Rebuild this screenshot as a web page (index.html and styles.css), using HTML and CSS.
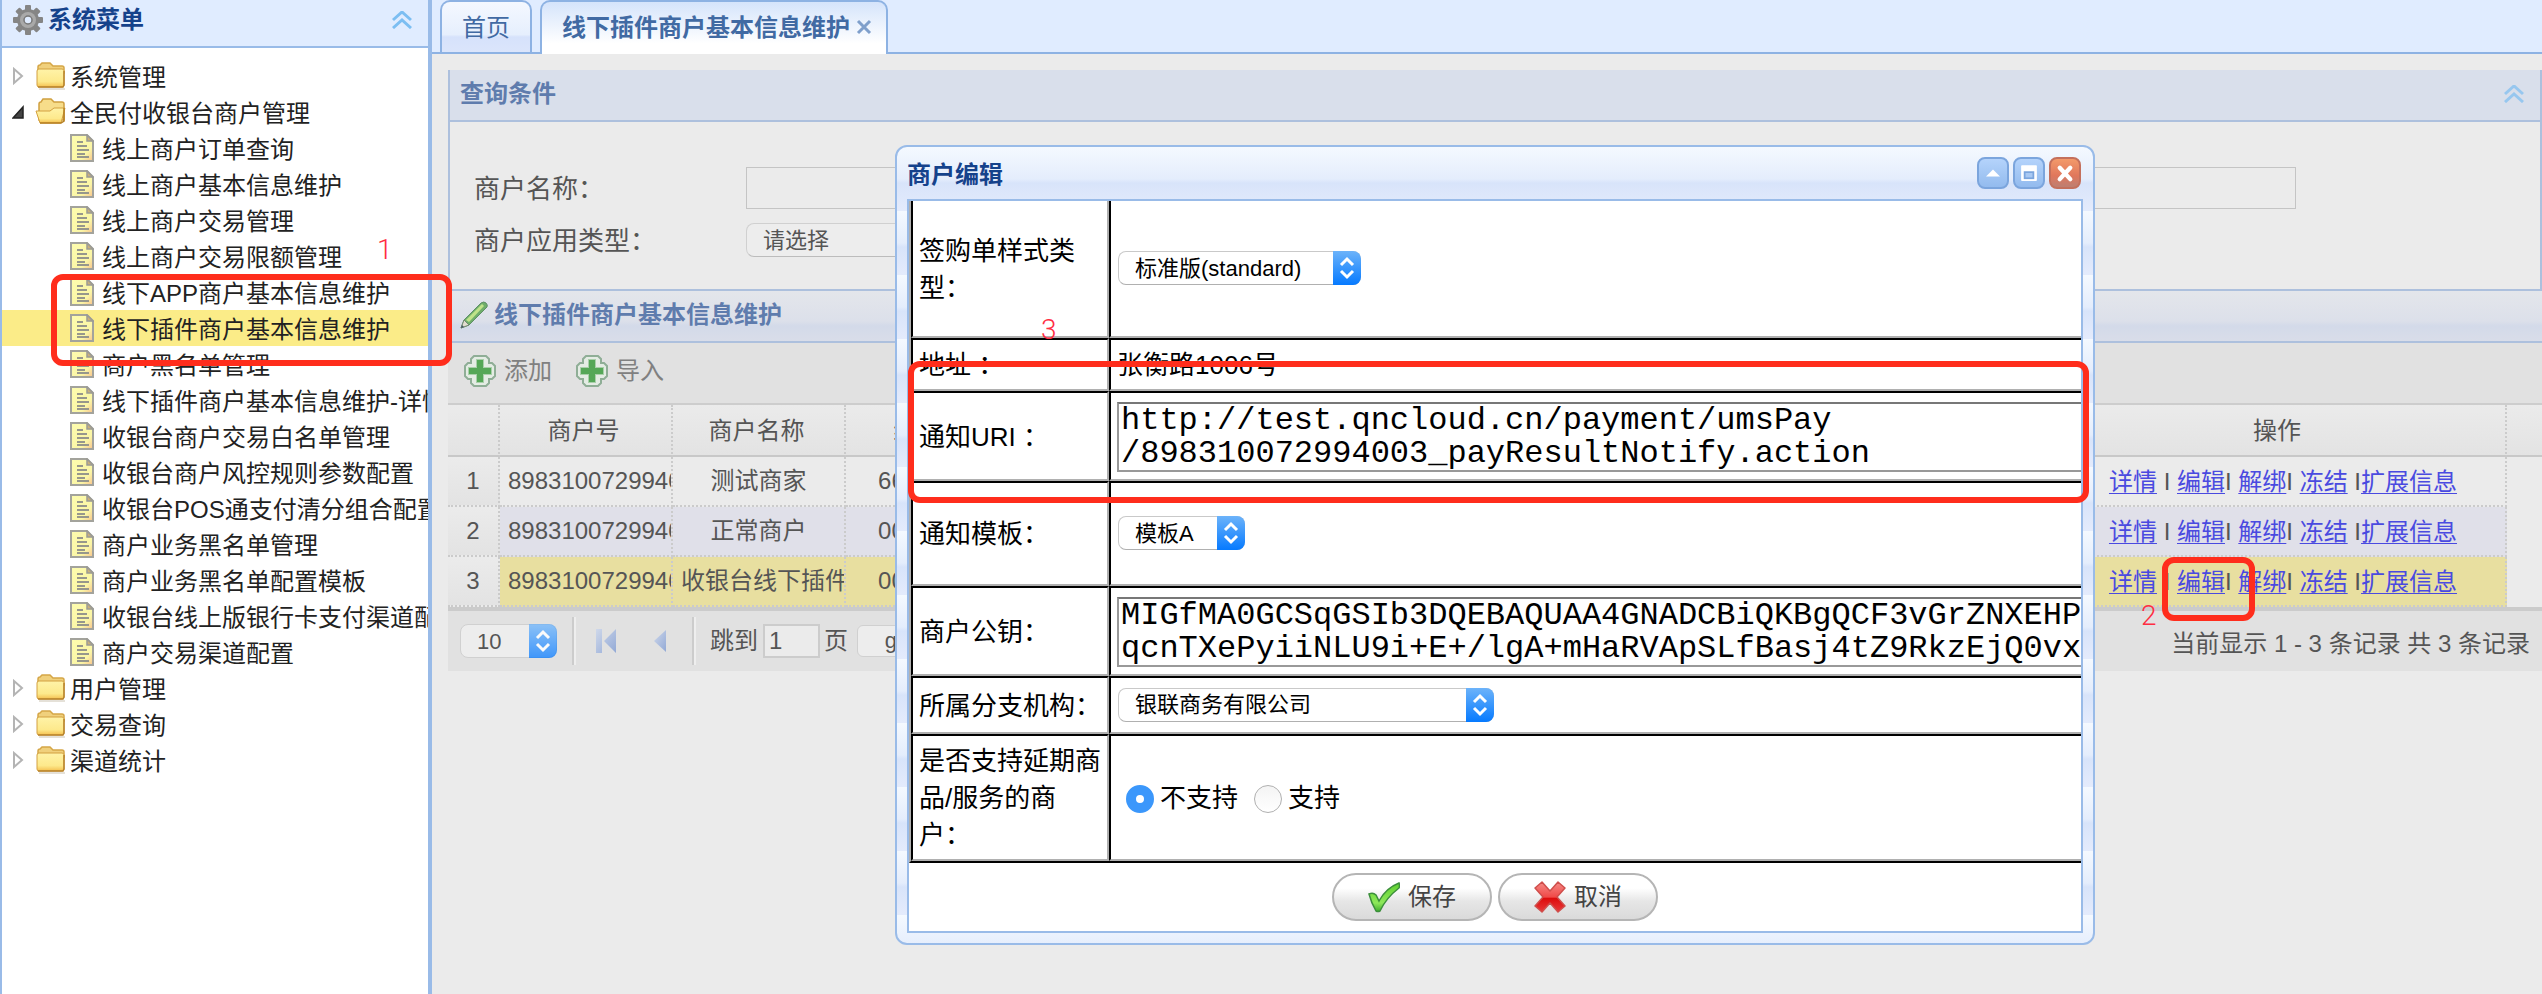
FILE: index.html
```html
<!DOCTYPE html>
<html lang="zh-CN">
<head>
<meta charset="utf-8">
<title>线下插件商户基本信息维护</title>
<link rel="stylesheet" href="styles.css">
</head>
<body>
<svg class="defs" aria-hidden="true">
  <defs>
    <linearGradient id="gFolder" x1="0" y1="0" x2="0" y2="1"><stop offset="0" stop-color="#fff3a8"/><stop offset="0.7" stop-color="#fde98c"/><stop offset="1" stop-color="#f5c04f"/></linearGradient>
    <linearGradient id="gPage" x1="0" y1="0" x2="1" y2="1"><stop offset="0" stop-color="#fdfcae"/><stop offset="0.7" stop-color="#fbf6a6"/><stop offset="1" stop-color="#f8c28c"/></linearGradient>
    <linearGradient id="gNav" x1="0" y1="0" x2="1" y2="1"><stop offset="0" stop-color="#cfd8ea"/><stop offset="1" stop-color="#92a9d6"/></linearGradient>
    <linearGradient id="gTick" x1="0" y1="0" x2="0" y2="1"><stop offset="0" stop-color="#5fd02f"/><stop offset="0.7" stop-color="#8ee85a"/><stop offset="1" stop-color="#3fae2c"/></linearGradient>
    <linearGradient id="gCross" x1="0" y1="0" x2="0" y2="1"><stop offset="0" stop-color="#f58a86"/><stop offset="0.5" stop-color="#f04a48"/><stop offset="0.55" stop-color="#dd0d0d"/><stop offset="1" stop-color="#e83a3a"/></linearGradient>
  </defs>
  <symbol id="folder" viewBox="0 0 32 28">
    <path d="M3 8V5q0-2 2-2l2-2h8l3 3h9q2 0 2 2v5H3z" fill="#f0d07c" stroke="#d5a647" stroke-width="1.5"/>
    <rect x="2" y="7" width="27" height="18" rx="2" fill="url(#gFolder)" stroke="#d3a040" stroke-width="1"/>
    <path d="M3 25h25l1-2V9" stroke="#b8842c" stroke-width="1.500" fill="none"/>
    <path d="M4 27h26" stroke="#9a8a68" stroke-width="1" opacity=".5"/>
  </symbol>
  <symbol id="folder-open" viewBox="0 0 32 28">
    <path d="M4 22V6q0-2 2-2l2-3h8l3 3h8q2 0 2 2v16z" fill="#f7dd8a" stroke="#d0a040" stroke-width="1.5"/>
    <path d="M1 13h14l4-3h11l-4 15H5z" fill="url(#gFolder)" stroke="#d3a040" stroke-width="1"/>
    <path d="M5 25h21l3-2V10" stroke="#b57f22" stroke-width="1.500" fill="none"/>
  </symbol>
  <symbol id="page" viewBox="0 0 24 28">
    <path d="M1 1h16l6 6v20H1z" fill="url(#gPage)" stroke="#a3a39c" stroke-width="2"/>
    <path d="M17 1v6h6z" fill="#c9b07c" stroke="#9b9b95" stroke-width="1.5"/>
    <path d="M7 8h6M7 12h10M7 16h12M7 20h8M7 23h12" stroke="#97978c" stroke-width="2"/>
  </symbol>
  <symbol id="tri" viewBox="0 0 12 18"><path d="M2 2l8 7-8 7z" fill="#fff" stroke="#b4b4b4" stroke-width="2"/></symbol>
  <symbol id="tri-open" viewBox="0 0 12 18"><path d="M11 4v11H1z" fill="#444" stroke="#222" stroke-width="1.500"/></symbol>
  <symbol id="collapse" viewBox="0 0 20 18"><path d="M1 9l9-8 9 8M1 17l9-8 9 8" fill="none" stroke="#7cbef2" stroke-width="3"/></symbol>
  <symbol id="plus" viewBox="0 0 32 32">
    <path d="M10 1h12l3 3v4h3l3 3v10l-3 3h-3v4l-3 3H10l-3-3v-4H4l-3-3V11l3-3h3V4z" fill="#e4ece4" stroke="#8fae96" stroke-width="2"/>
    <path d="M12 4h8v8h8v8h-8v8h-8v-8H4v-8h8z" fill="#a9cfaa"/>
    <path d="M13 5h6v8h8v6h-8v8h-6v-8H5v-6h8z" fill="#55a757"/>
  </symbol>
  <symbol id="updown" viewBox="0 0 28 34"><path d="M8 14l6-6 6 6M8 20l6 6 6-6" fill="none" stroke="#fff" stroke-width="3"/></symbol>
</svg>

<div class="page">
  <aside class="sidebar">
    <header class="side-head">
      <svg class="gear" viewBox="0 0 30 30"><g fill="#858585"><circle cx="15" cy="15" r="11"/><g id="teeth"><rect x="12" y="0" width="6" height="30" rx="1"/><rect x="0" y="12" width="30" height="6" rx="1"/></g><use href="#teeth" transform="rotate(45 15 15)"/></g><circle cx="15" cy="15" r="8" fill="#a9a9a9"/><circle cx="15" cy="15" r="4" fill="#e0ecff" stroke="#777" stroke-width="1.500"/></svg>
      <h2>系统菜单</h2>
      <svg class="ic-collapse"><use href="#collapse"/></svg>
    </header>
    <ul class="tree">
      <li><svg class="tri"><use href="#tri"/></svg><svg class="folder"><use href="#folder"/></svg><span>系统管理</span></li>
      <li><svg class="tri"><use href="#tri-open"/></svg><svg class="folder"><use href="#folder-open"/></svg><span>全民付收银台商户管理</span></li>
      <li class="leaf"><svg class="file"><use href="#page"/></svg><span>线上商户订单查询</span></li>
      <li class="leaf"><svg class="file"><use href="#page"/></svg><span>线上商户基本信息维护</span></li>
      <li class="leaf"><svg class="file"><use href="#page"/></svg><span>线上商户交易管理</span></li>
      <li class="leaf"><svg class="file"><use href="#page"/></svg><span>线上商户交易限额管理</span></li>
      <li class="leaf"><svg class="file"><use href="#page"/></svg><span>线下APP商户基本信息维护</span></li>
      <li class="leaf selected"><svg class="file"><use href="#page"/></svg><span>线下插件商户基本信息维护</span></li>
      <li class="leaf"><svg class="file"><use href="#page"/></svg><span>商户黑名单管理</span></li>
      <li class="leaf"><svg class="file"><use href="#page"/></svg><span>线下插件商户基本信息维护-详情</span></li>
      <li class="leaf"><svg class="file"><use href="#page"/></svg><span>收银台商户交易白名单管理</span></li>
      <li class="leaf"><svg class="file"><use href="#page"/></svg><span>收银台商户风控规则参数配置</span></li>
      <li class="leaf"><svg class="file"><use href="#page"/></svg><span>收银台POS通支付清分组合配置</span></li>
      <li class="leaf"><svg class="file"><use href="#page"/></svg><span>商户业务黑名单管理</span></li>
      <li class="leaf"><svg class="file"><use href="#page"/></svg><span>商户业务黑名单配置模板</span></li>
      <li class="leaf"><svg class="file"><use href="#page"/></svg><span>收银台线上版银行卡支付渠道配置</span></li>
      <li class="leaf"><svg class="file"><use href="#page"/></svg><span>商户交易渠道配置</span></li>
      <li><svg class="tri"><use href="#tri"/></svg><svg class="folder"><use href="#folder"/></svg><span>用户管理</span></li>
      <li><svg class="tri"><use href="#tri"/></svg><svg class="folder"><use href="#folder"/></svg><span>交易查询</span></li>
      <li><svg class="tri"><use href="#tri"/></svg><svg class="folder"><use href="#folder"/></svg><span>渠道统计</span></li>
    </ul>
  </aside>

  <main class="main">
    <nav class="tabs">
      <button class="tab" type="button">首页</button>
      <button class="tab active" type="button">线下插件商户基本信息维护<svg class="tab-close" viewBox="0 0 16 16"><path d="M2 2l12 12M14 2L2 14" stroke="#7f9fcb" stroke-width="3"/></svg></button>
    </nav>

    <div class="content">
      <section class="query">
        <header class="query-head"><h3>查询条件</h3><svg class="ic-collapse faded"><use href="#collapse"/></svg></header>
        <form class="query-form">
          <label for="q-name">商户名称：</label><input id="q-name" class="q-input" type="text">
          <label for="q-type">商户应用类型：</label><select id="q-type" class="q-select"><option>请选择</option></select>
        </form>
      </section>

      <section class="grid">
        <header class="grid-head">
          <svg class="pencil" viewBox="0 0 28 28"><path d="M1 27l3-8L21 2q3-2 5 0t1 4L9 24z" fill="#6fae6a" stroke="#5f8f66" stroke-width="1"/><path d="M6 19L22 3l2 2L9 21z" fill="#bfe389"/><path d="M1 27l3-8 5 5z" fill="#e2ddcf" stroke="#718a71" stroke-width="1"/><path d="M1 27l1-3 2 2z" fill="#456"/></svg>
          <h3>线下插件商户基本信息维护</h3>
        </header>
        <div class="toolbar">
          <button type="button"><svg class="plus"><use href="#plus"/></svg><span>添加</span></button>
          <button type="button"><svg class="plus"><use href="#plus"/></svg><span>导入</span></button>
        </div>
        <table class="data">
          <colgroup><col class="c-no"><col class="c-id"><col class="c-id"><col class="c-id"><col><col class="c-op"><col class="c-end"></colgroup>
          <thead><tr><th></th><th>商户号</th><th>商户名称</th><th>终端号</th><th></th><th>操作</th><th></th></tr></thead>
          <tbody>
            <tr><td>1</td><td>898310072994001</td><td>测试商家</td><td>66000001</td><td></td><td class="ops"><a href="#">详情</a> I <a href="#">编辑</a>I <a href="#">解绑</a>I <a href="#">冻结</a> I<a href="#">扩展信息</a></td><td></td></tr>
            <tr class="alt"><td>2</td><td>898310072994002</td><td>正常商户</td><td>00000002</td><td></td><td class="ops"><a href="#">详情</a> I <a href="#">编辑</a>I <a href="#">解绑</a>I <a href="#">冻结</a> I<a href="#">扩展信息</a></td><td></td></tr>
            <tr class="picked"><td>3</td><td>898310072994003</td><td>收银台线下插件</td><td>00000003</td><td></td><td class="ops"><a href="#">详情</a> I <a href="#">编辑</a>I <a href="#">解绑</a>I <a href="#">冻结</a> I<a href="#">扩展信息</a></td><td></td></tr>
          </tbody>
        </table>
        <footer class="pager">
          <span class="pick size"><select aria-label="每页条数"><option>10</option></select><svg class="updown"><use href="#updown"/></svg></span>
          <i class="sep"></i>
          <button class="nav" type="button" aria-label="首页"><svg class="first" viewBox="0 0 20 24"><path d="M0 0h6v24H0zM20 0v24L8 12z" fill="url(#gNav)"/></svg></button>
          <button class="nav prev" type="button" aria-label="上一页"><svg class="back" viewBox="0 0 14 24"><path d="M13 1v22L1 12z" fill="url(#gNav)"/></svg></button>
          <i class="sep"></i>
          <label class="jump" for="p-no">跳到</label><input id="p-no" class="page-no" type="text" value="1"><span>页</span>
          <button class="go" type="button">go</button>
          <span class="total">当前显示 1 - 3 条记录 共 3 条记录</span>
        </footer>
      </section>
    </div>
  </main>

  <section class="dialog" role="dialog" aria-labelledby="dlg-title">
    <header class="dlg-head">
      <h2 id="dlg-title">商户编辑</h2>
      <button class="tool" type="button" aria-label="收起"><svg viewBox="0 0 32 32"><path d="M8 20l8-8 8 8z" fill="#fff"/></svg></button>
      <button class="tool" type="button" aria-label="最大化"><svg viewBox="0 0 32 32"><rect x="7" y="7" width="18" height="18" rx="1" fill="#fff"/><rect x="11" y="15" width="10" height="7" fill="#a9c9f3" stroke="#7ba5dd" stroke-width="2"/></svg></button>
      <button class="tool close" type="button" aria-label="关闭"><svg viewBox="0 0 32 32"><path d="M10 10l12 13M22 10L10 23" stroke="#fff" stroke-width="5" stroke-linecap="round"/></svg></button>
    </header>
    <div class="dlg-body">
      <table class="form">
        <colgroup><col class="f-label"><col></colgroup>
        <tbody>
          <tr class="h-first"><td><label for="f-style">签购单样式类型：</label></td><td><span class="pick w-style"><select id="f-style"><option>标准版(standard)</option></select><svg class="updown"><use href="#updown"/></svg></span></td></tr>
          <tr><td>地址 ：</td><td>张衡路1006号</td></tr>
          <tr class="h-area"><td><label for="f-uri">通知URI ：</label></td><td><textarea id="f-uri" wrap="off" rows="2">http://test.qncloud.cn/payment/umsPay
/898310072994003_payResultNotify.action</textarea></td></tr>
          <tr class="h-tpl"><td><label for="f-tpl">通知模板：</label></td><td><span class="pick w-tpl"><select id="f-tpl"><option>模板A</option></select><svg class="updown"><use href="#updown"/></svg></span></td></tr>
          <tr class="h-area"><td><label for="f-key">商户公钥：</label></td><td><textarea id="f-key" wrap="off" rows="2">MIGfMA0GCSqGSIb3DQEBAQUAA4GNADCBiQKBgQCF3vGrZNXEHP
qcnTXePyiiNLU9i+E+/lgA+mHaRVApSLfBasj4tZ9RkzEjQ0vx</textarea></td></tr>
          <tr class="h-org"><td><label for="f-org">所属分支机构：</label></td><td><span class="pick w-org"><select id="f-org"><option>银联商务有限公司</option></select><svg class="updown"><use href="#updown"/></svg></span></td></tr>
          <tr><td>是否支持延期商品/服务的商户：</td><td><div class="radios"><label><input type="radio" name="delay" checked>不支持</label><label><input type="radio" name="delay">支持</label></div></td></tr>
        </tbody>
      </table>
      <div class="actions">
        <button type="button"><svg viewBox="0 0 32 32"><path d="M1 13q4-2 7 1l3 6Q18 7 31 2q1 3 0 5Q18 17 12 30q-2 1-4 0Q3 21 1 13z" fill="url(#gTick)" stroke="#3c8f3c" stroke-width="1.500"/></svg><span>保存</span></button>
        <button type="button"><svg viewBox="0 0 32 32"><path d="M8 1l8 9 8-9 7 6-8 9 8 9-7 6-8-9-8 9-7-6 8-9-8-9z" fill="url(#gCross)" stroke="#cf4f4c" stroke-width="1.500" stroke-linejoin="round"/></svg><span>取消</span></button>
      </div>
    </div>
  </section>

  <div class="mark mark-1"></div><span class="num num-1">1</span>
  <div class="mark mark-2"></div><span class="num num-2">2</span>
  <div class="mark mark-3"></div><span class="num num-3">3</span>
</div>
</body>
</html>
```
FILE: styles.css
```css
*, *::before, *::after { box-sizing: border-box; }
body {
  margin: 0;
  font: 24px/36px "Liberation Sans", "Noto Sans CJK SC", sans-serif;
  color: #333;
}
h2, h3 { margin: 0; font-size: 24px; font-weight: bold; }
button, input, select, textarea { font-family: inherit; margin: 0; color: inherit; }
button { padding: 0; border: 0; background: none; font-size: 24px; }
svg { display: block; flex: none; }
.defs { position: absolute; width: 0; height: 0; }

.page {
  position: relative;
  display: flex;
  min-height: 100vh;
  overflow: hidden;
}

/* sidebar */
.sidebar {
  flex: none;
  width: 432px;
  border: solid #99bbe8;
  border-width: 0 4px 0 2px;
  overflow: hidden;
  background: #fff;
}
.side-head {
  display: flex;
  align-items: center;
  height: 48px;
  padding: 0 16px 6px 11px;
  border-bottom: 2px solid #99bbe8;
  background: #e0ecff;
  color: #15428b;
}
.side-head h2 { flex: 1; margin-left: 5px; }
.gear { width: 30px; height: 30px; }
.ic-collapse { width: 20px; height: 18px; }
.faded { opacity: .7; }
.tree { list-style: none; margin: 0; padding: 10px 0; }
.tree li {
  display: flex;
  align-items: center;
  height: 36px;
  padding-left: 10px;
  white-space: nowrap;
  color: #222;
}
.tree span { padding-top: 3px; }
.tree .leaf { padding-left: 68px; }
.tree .selected { background: #fbec88; }
.tri { width: 12px; height: 18px; margin-right: 11px; }
.folder { width: 32px; height: 28px; margin-right: 3px; }
.file { width: 24px; height: 28px; margin-right: 8px; }

/* main area */
.main { flex: 1; min-width: 0; background: #ebebeb; }
.tabs {
  display: flex;
  gap: 8px;
  height: 54px;
  padding-left: 8px;
  border-bottom: 2px solid #8db2e3;
  background: #e0ecff;
}
.tab {
  display: flex;
  align-items: center;
  height: 52px;
  padding: 0 20px 4px;
  border: 2px solid #8db2e3;
  border-bottom: 0;
  border-radius: 10px 10px 0 0;
  background: linear-gradient(#f4f8ff, #e6effd 65%, #d6e2fb 70%, #dbe5fb);
  color: #416aa3;
}
.tab.active {
  height: 54px;
  padding: 0 14px 6px 20px;
  font-weight: bold;
  background: linear-gradient(#d5e4fb, #fff 80%);
}
.tab-close { width: 16px; height: 16px; margin: 4px 0 0 6px; }
.content { padding: 16px 0 0 16px; color: #555; }

.query { border: 2px solid #adc0dd; border-top: 0; }
.query-head {
  display: flex;
  align-items: center;
  justify-content: space-between;
  height: 52px;
  padding: 0 16px 2px 10px;
  border-bottom: 2px solid #adc0dd;
  background: #d9dfeb;
  color: #5f7cad;
}
.query-form {
  display: grid;
  grid-template-columns: 272px 1fr;
  grid-template-rows: 42px 34px;
  row-gap: 14px;
  align-items: center;
  padding: 45px 244px 32px 24px;
  font-size: 26px;
}
.query-form label { padding-top: 2px; }
.q-input { width: 100%; height: 42px; border: 1px solid #c4c4c4; background: transparent; }
.q-select {
  appearance: none;
  width: 400px;
  height: 34px;
  padding: 0 16px;
  border: 1px solid #d0d0d0;
  border-bottom-color: #bcbcbc;
  border-radius: 8px;
  background: #ededed;
  font-size: 22px;
}

.grid-head {
  display: flex;
  align-items: center;
  gap: 6px;
  height: 52px;
  padding: 0 12px 2px;
  border-bottom: 2px solid #adc0dd;
  background: linear-gradient(#e4e6eb, #dce0ea 60%, #d3dae9 70%, #d9dde9);
  color: #5f7cad;
}
.pencil { width: 28px; height: 28px; }
.toolbar {
  display: flex;
  gap: 24px;
  height: 62px;
  padding: 10px 16px;
  border-bottom: 2px solid #cdcdcd;
  background: #e1e1e1;
}
.toolbar button { display: flex; align-items: center; gap: 8px; height: 36px; color: #808080; }
.toolbar span, .actions span { padding-bottom: 5px; }
.plus { width: 32px; height: 32px; }

.data { width: 100%; table-layout: fixed; border-collapse: separate; border-spacing: 0; }
.c-no { width: 52px; }
.c-id { width: 173px; }
.c-op { width: 454px; }
.c-end { width: 35px; }
.data th, .data td {
  height: 50px;
  padding: 0 8px;
  border-right: 2px dotted #cbcbcb;
  border-bottom: 2px dotted #cbcbcb;
  overflow: hidden;
  white-space: nowrap;
  font-weight: normal;
  line-height: 36px;
  text-align: center;
}
.data th {
  height: 52px;
  padding: 2px 10px 0 6px;
  border-bottom: 2px solid #c8c8c8;
  background: linear-gradient(#ebebeb, #e3e3e3);
}
.data td:nth-child(2) { text-align: left; }
.data td:first-child { background: linear-gradient(#ebebeb, #e3e3e3); }
.data th:last-child, .data td:last-child { border-right: 0; }
.data td:last-child { border-bottom: 0; }
.data .ops { padding: 1px 4px 0 12px; }
.alt td:not(:first-child):not(:last-child) { background: #e0e0e9; }
.picked td:not(:first-child):not(:last-child) { background: #e8dfa0; }
.data a { color: #4a4ae0; text-underline-offset: 3px; text-decoration-thickness: 1px; }

.pager {
  display: flex;
  align-items: center;
  height: 64px;
  padding: 0 12px;
  border-top: 4px solid #cbcbcb;
  background: #e1e1e1;
  white-space: nowrap;
}
.sep { width: 4px; height: 48px; border-left: 2px solid #ccc; border-right: 2px solid #eee; }
.size { width: 97px; margin-right: 15px; }
.pager .updown { opacity: .75; }
.nav { margin-left: 20px; }
.nav.prev { margin: 0 25px 0 37px; }
.first { width: 20px; height: 24px; }
.back { width: 14px; height: 24px; }
.jump { margin-left: 14px; }
.page-no {
  width: 57px;
  height: 34px;
  margin: 0 4px 0 5px;
  padding: 0 4px;
  border: 2px solid #ccc;
  background: #ebebeb;
  font-size: 24px;
}
.go {
  width: 80px;
  height: 32px;
  margin-left: 9px;
  border: 1px solid #d0d0d0;
  border-radius: 6px;
  background: #ededed;
  font-size: 22px;
}
.total { margin-left: auto; padding-top: 6px; }

/* select with a stepper-like arrow cap */
.pick { display: inline-grid; grid-template-columns: 1fr 28px; height: 34px; vertical-align: middle; }
.pick select {
  grid-area: 1 / 1 / 2 / 3;
  appearance: none;
  width: 100%;
  height: 34px;
  padding: 0 16px;
  border: 1px solid #c9c9c9;
  border-bottom-color: #b0b0b0;
  border-radius: 8px;
  background: #fff;
  font-size: 22px;
}
.pager .pick select { background: #ededed; border-color: #d0d0d0; }
.updown {
  grid-area: 1 / 2;
  width: 28px;
  height: 34px;
  border-radius: 0 8px 8px 0;
  background: linear-gradient(#6cb3fa, #067aff);
  pointer-events: none;
}

/* dialog */
.dialog {
  position: absolute;
  left: 895px;
  top: 145px;
  width: 1200px;
  padding: 0 10px 10px;
  border: 2px solid #99bbe8;
  border-radius: 12px;
  background: repeating-linear-gradient(#f4f9ff 0, #e4edfc 32px, #d8e4fa 36px, #e4ebfc 64px);
  color: #000;
  font-size: 26px;
  line-height: 37px;
}
.dlg-head { display: flex; align-items: center; gap: 4px; height: 52px; padding: 0 2px 0 0; }
.dlg-head h2 { flex: 1; padding-top: 2px; color: #15428b; }
.tool {
  width: 32px;
  height: 32px;
  border: 2px solid #7ba5dd;
  border-radius: 8px;
  background: linear-gradient(#b4d3fb, #93bbee);
}
.tool.close { border-color: #c4705c; background: linear-gradient(#f39a6a, #e0775c 60%, #bd7f72); }
.tool svg { width: 28px; height: 28px; }
.dlg-body { border: 2px solid #99bbe8; background: #fff; overflow: hidden; }
.form {
  width: 100%;
  table-layout: fixed;
  border-collapse: separate;
  border-spacing: 0;
  border: solid #b0b0b0;
  border-width: 0 0 2px 2px;
  border-bottom-color: #000;
}
.f-label { width: 198px; }
.form td {
  padding: 7px 6px 5px;
  border: 2px solid #b0b0b0;
  border-top-color: #000;
  border-left-color: #000;
  overflow: hidden;
}
.form td:last-child { border-right: 0; white-space: nowrap; }
.form tr:first-child td { border-top: 0; }
.h-first { height: 137px; }
.h-area { height: 90px; }
.h-tpl { height: 105px; }
.h-org { height: 58px; }
.form .pick { margin-left: 1px; }
.form .h-first .pick, .form .h-tpl .pick, .form .h-org .pick { margin-bottom: 4px; }
.w-style { width: 243px; }
.w-tpl { width: 127px; }
.w-org { width: 376px; }
.form textarea {
  display: block;
  width: 1100px;
  height: 70px;
  padding: 0 2px;
  border: 2px solid #999;
  border-top-color: #777;
  overflow: hidden;
  resize: none;
  background: #fff;
  font: 32px/33px "Liberation Mono", monospace;
}
.radios { display: flex; gap: 16px; padding-left: 9px; }
.radios label { display: flex; align-items: center; gap: 6px; }
.radios input {
  appearance: none;
  width: 28px;
  height: 28px;
  border: 1px solid #b0b0b0;
  border-radius: 50%;
  background: linear-gradient(#f4f4f4, #fff);
}
.radios input:checked { border: 10px solid #3b97fb; background: #fff; }
.actions { display: flex; justify-content: center; gap: 6px; padding: 10px 0; }
.actions button {
  display: flex;
  align-items: center;
  justify-content: center;
  gap: 8px;
  width: 160px;
  height: 48px;
  border: 2px solid #b5b5b5;
  border-radius: 24px;
  background: linear-gradient(#fff 30%, #e6e6e6 60%, #dadada);
  color: #444;
}
.actions svg { width: 32px; height: 32px; }

/* step marks drawn over the screen */
.mark { position: absolute; border: 6px solid #ff2d1c; border-radius: 12px; pointer-events: none; }
.mark-1 { left: 51px; top: 274px; width: 401px; height: 92px; }
.mark-2 { left: 2162px; top: 557px; width: 93px; height: 64px; }
.mark-3 { left: 908px; top: 361px; width: 1181px; height: 142px; }
.num { position: absolute; font: 300 28px/32px Roboto, sans-serif; color: #ff2d42; }
.num-1 { left: 377px; top: 234px; }
.num-2 { left: 2141px; top: 600px; }
.num-3 { left: 1041px; top: 314px; }
```
